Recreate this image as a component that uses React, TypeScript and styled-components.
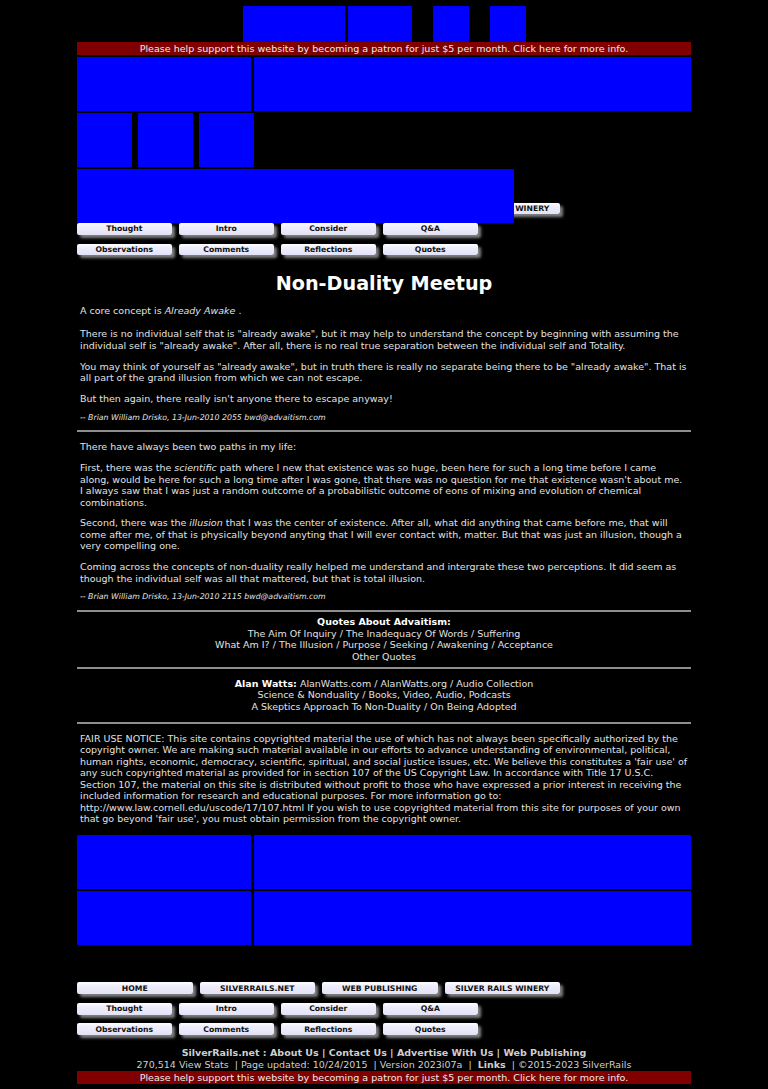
import React from "react";
import styled, { createGlobalStyle } from "styled-components";

const GlobalStyle = createGlobalStyle`
  html, body { margin: 0; padding: 0; background: #000; }
  body {
    font-family: "DejaVu Sans", Verdana, sans-serif;
    color: #e2e2e2;
  }
`;

const Page = styled.div`
  width: 614px;
  margin: 0 auto;
  padding: 6px 0 5px;
`;

const TopAds = styled.div`
  display: flex;
  justify-content: center;
  height: 36px;
`;

const AdBox = styled.div<{ $w: number; $h?: number; $ml?: number }>`
  flex: none;
  width: ${(p) => p.$w}px;
  height: ${(p) => p.$h ?? 54}px;
  margin-left: ${(p) => p.$ml ?? 0}px;
  background: #0000ff;
`;

const PatronBar = styled.a<{ $mt?: number }>`
  display: block;
  height: 13px;
  margin-top: ${(p) => p.$mt ?? 0}px;
  line-height: 13px;
  background: #800000;
  color: #ececec;
  text-align: center;
  font-size: 9.55px;
  text-decoration: none;
  white-space: nowrap;
`;

const BannerRow = styled.div<{ $gap: number; $mt: number }>`
  display: flex;
  gap: ${(p) => p.$gap}px;
  margin-top: ${(p) => p.$mt}px;
`;

const Stack = styled.div`
  display: grid;
  margin-top: 2px;
  & > * {
    grid-area: 1 / 1;
  }
`;

const StackBanner = styled(AdBox)`
  justify-self: start;
`;

const NavRow = styled.div<{ $gap: number }>`
  display: flex;
  align-items: flex-start;
  gap: ${(p) => p.$gap}px;
  height: 20.5px;
  align-self: end;
`;

const NavButton = styled.a<{ $w: number }>`
  flex: none;
  display: flex;
  align-items: center;
  justify-content: center;
  box-sizing: border-box;
  width: ${(p) => p.$w}px;
  height: 11.8px;
  background: linear-gradient(#ffffff 0%, #eeeefc 30%, #e2e2f6 100%);
  border-radius: 2px;
  box-shadow: 3px 3px 3px rgba(150, 150, 150, 0.85);
  color: #111;
  font-size: 7.7px;
  font-weight: bold;
  line-height: 1;
  text-decoration: none;
  white-space: nowrap;
`;

const Title = styled.h1`
  margin: 9.3px 0 10px;
  text-align: center;
  font-size: 19.2px;
  line-height: 22px;
  font-weight: bold;
  color: #fff;
`;

const Content = styled.div`
  font-size: 9.5px;
  line-height: 11.45px;
`;

const Para = styled.p`
  margin: 9.4px 0;
  padding: 0 3px;
`;

const Signature = styled.p`
  margin: 9px 0 7.7px;
  padding: 0 3px;
  font-size: 7.8px;
  line-height: 8.6px;
  font-style: italic;
`;

const Divider = styled.hr`
  margin: 4.5px 0;
  height: 2px;
  border: 0;
  background: #8e8e8e;
`;

const CenterBlock = styled.div`
  text-align: center;
`;

const CenterPara = styled(Para)`
  text-align: center;
`;

const Label = styled.b`
  color: #fff;
`;

const Link = styled.a`
  color: inherit;
  text-decoration: none;
`;

const BottomAds = styled.div`
  display: grid;
  grid-template-columns: 174px 437px;
  grid-auto-rows: 54px;
  column-gap: 3px;
  row-gap: 2.3px;
  margin-top: 10.5px;
`;

const BlueCell = styled.div`
  background: #0000ff;
`;

const BottomNav = styled.div`
  margin-top: 37px;
`;

const Footer = styled.div`
  margin-top: 3px;
  text-align: center;
  color: #cfcfcf;
  font-size: 9.5px;
  line-height: 11.7px;
  white-space: nowrap;
`;

const FooterLinks = styled.div`
  font-weight: bold;
`;

const wideButtons = ["HOME", "SILVERRAILS.NET", "WEB PUBLISHING", "SILVER RAILS WINERY"];
const navRow1 = ["Thought", "Intro", "Consider", "Q&A"];
const navRow2 = ["Observations", "Comments", "Reflections", "Quotes"];

const WideRow = () => (
  <NavRow $gap={7}>
    {wideButtons.map((b) => (
      <NavButton key={b} $w={115.5} href="#">
        {b}
      </NavButton>
    ))}
  </NavRow>
);

const SmallRow = ({ items }: { items: string[] }) => (
  <NavRow $gap={7.5}>
    {items.map((b) => (
      <NavButton key={b} $w={94.5} href="#">
        {b}
      </NavButton>
    ))}
  </NavRow>
);

const patronText =
  "Please help support this website by becoming a patron for just $5 per month. Click here for more info.";

export default function App() {
  return (
    <>
      <GlobalStyle />
      <Page>
        <TopAds>
          <AdBox $w={102} $h={36} />
          <AdBox $w={64} $h={36} $ml={3} />
          <AdBox $w={36} $h={36} $ml={21} />
          <AdBox $w={36} $h={36} $ml={21} />
        </TopAds>
        <PatronBar href="#">{patronText}</PatronBar>
        <BannerRow $gap={3} $mt={1.5}>
          <AdBox $w={174} />
          <AdBox $w={437} />
        </BannerRow>
        <BannerRow $gap={6.5} $mt={2.5}>
          <AdBox $w={54.5} />
          <AdBox $w={54.5} />
          <AdBox $w={54.5} />
        </BannerRow>
        <Stack>
          <WideRow />
          <StackBanner $w={436.5} />
        </Stack>
        <SmallRow items={navRow1} />
        <SmallRow items={navRow2} />

        <Title>Non-Duality Meetup</Title>

        <Content>
          <Para>
            A core concept is <i>Already Awake</i> .
            <br />
            <br />
            There is no individual self that is "already awake", but it may help to understand the
            concept by beginning with assuming the individual self is "already awake". After all,
            there is no real true separation between the individual self and Totality.
          </Para>
          <Para>
            You may think of yourself as "already awake", but in truth there is really no separate
            being there to be "already awake". That is all part of the grand illusion from which we
            can not escape.
          </Para>
          <Para>But then again, there really isn't anyone there to escape anyway!</Para>
          <Signature>-- Brian William Drisko, 13-Jun-2010 2055 bwd@advaitism.com</Signature>
          <Divider />
          <Para>There have always been two paths in my life:</Para>
          <Para>
            First, there was the <i>scientific</i> path where I new that existence was so huge,
            been here for such a long time before I came along, would be here for such a long time
            after I was gone, that there was no question for me that existence wasn't about me. I
            always saw that I was just a random outcome of a probabilistic outcome of eons of mixing
            and evolution of chemical combinations.
          </Para>
          <Para>
            Second, there was the <i>illusion</i> that I was the center of existence. After all,
            what did anything that came before me, that will come after me, of that is physically
            beyond anyting that I will ever contact with, matter. But that was just an illusion,
            though a very compelling one.
          </Para>
          <Para>
            Coming across the concepts of non-duality really helped me understand and intergrate
            these two perceptions. It did seem as though the individual self was all that mattered,
            but that is total illusion.
          </Para>
          <Signature>-- Brian William Drisko, 13-Jun-2010 2115 bwd@advaitism.com</Signature>
          <Divider />
          <CenterBlock>
            <Label>Quotes About Advaitism:</Label>
            <br />
            <Link href="#">The Aim Of Inquiry</Link> / <Link href="#">The Inadequacy Of Words</Link>{" "}
            / <Link href="#">Suffering</Link>
            <br />
            <Link href="#">What Am I?</Link> / <Link href="#">The Illusion</Link> /{" "}
            <Link href="#">Purpose</Link> / <Link href="#">Seeking</Link> /{" "}
            <Link href="#">Awakening</Link> / <Link href="#">Acceptance</Link>
            <br />
            <Link href="#">Other Quotes</Link>
          </CenterBlock>
          <Divider />
          <CenterPara>
            <Label>Alan Watts:</Label> <Link href="#">AlanWatts.com</Link> /{" "}
            <Link href="#">AlanWatts.org</Link> / <Link href="#">Audio Collection</Link>
            <br />
            <Link href="#">Science &amp; Nonduality</Link> /{" "}
            <Link href="#">Books, Video, Audio, Podcasts</Link>
            <br />
            <Link href="#">A Skeptics Approach To Non-Duality</Link> /{" "}
            <Link href="#">On Being Adopted</Link>
          </CenterPara>
          <Divider />
          <Para>
            FAIR USE NOTICE: This site contains copyrighted material the use of which has not always
            been specifically authorized by the copyright owner. We are making such material
            available in our efforts to advance understanding of environmental, political, human
            rights, economic, democracy, scientific, spiritual, and social justice issues, etc. We
            believe this constitutes a 'fair use' of any such copyrighted material as provided for in
            section 107 of the US Copyright Law. In accordance with Title 17 U.S.C. Section 107, the
            material on this site is distributed without profit to those who have expressed a prior
            interest in receiving the included information for research and educational purposes.
            For more information go to: http://www.law.cornell.edu/uscode/17/107.html If you wish to
            use copyrighted material from this site for purposes of your own that go beyond 'fair
            use', you must obtain permission from the copyright owner.
          </Para>
        </Content>

        <BottomAds>
          <BlueCell />
          <BlueCell />
          <BlueCell />
          <BlueCell />
        </BottomAds>

        <BottomNav>
          <WideRow />
          <SmallRow items={navRow1} />
          <SmallRow items={navRow2} />
        </BottomNav>

        <Footer>
          <FooterLinks>
            <Link href="#">SilverRails.net</Link> : <Link href="#">About Us</Link> |{" "}
            <Link href="#">Contact Us</Link> | <Link href="#">Advertise With Us</Link> |{" "}
            <Link href="#">Web Publishing</Link>
          </FooterLinks>
          <div>
            270,514 View Stats &nbsp;| Page updated: 10/24/2015 &nbsp;| Version 2023i07a &nbsp;|&nbsp;{" "}
            <b>Links</b> &nbsp;| ©2015-2023 SilverRails
          </div>
        </Footer>
        <PatronBar href="#" $mt={1}>
          {patronText}
        </PatronBar>
      </Page>
    </>
  );
}
